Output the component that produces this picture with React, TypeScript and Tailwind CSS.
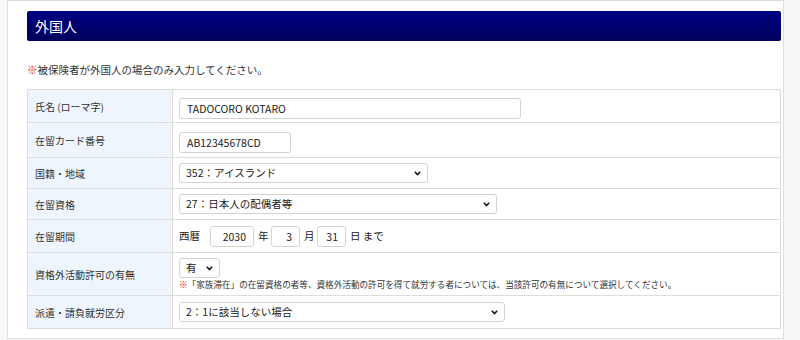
import React from "react";

const labelCell =
  "w-[145px] border border-[#dddddd] bg-[#eef5fc] pl-[7px] text-left align-middle text-[10px] font-normal text-[#333333]";
const valueCell = "border border-[#dddddd] bg-white pl-[6px] align-middle text-[#222222]";
const inputBase =
  "h-[21px] rounded-[3px] border border-[#d4d4d4] bg-white px-[7px] text-[10.5px] text-[#222222] outline-none";

function Select({ width, value, options }: { width: string; value: string; options: [string, string][] }) {
  return (
    <div className={`relative ${width}`}>
      <select
        className="block h-[20px] w-full appearance-none rounded-[3px] border border-[#d4d4d4] bg-white pl-[6px] pr-[16px] text-[10.5px] text-[#222222] outline-none"
        defaultValue={value}
      >
        {options.map(([v, t]) => (
          <option key={v} value={v}>
            {t}
          </option>
        ))}
      </select>
      <svg
        className="pointer-events-none absolute right-[7px] top-[8px]"
        width="7"
        height="5"
        viewBox="0 0 7 5"
      >
        <path d="M0.8 0.8 L3.5 3.6 L6.2 0.8" fill="none" stroke="#111" strokeWidth="1.5" />
      </svg>
    </div>
  );
}

export default function App() {
  return (
    <div className="h-[340px] w-[800px] bg-[#f8f8f8] font-['Noto_Sans_CJK_JP','Noto_Sans',sans-serif]">
      <div className="ml-[7px] h-[339px] w-[777px] border border-[#dedede] bg-white pl-[19px] pr-[2px] pt-[10px]">
        {/* Section title */}
        <div className="flex h-[30px] items-center rounded-[2px] bg-gradient-to-b from-[#000085] to-[#00005c] pl-[8px] text-[14px] text-white">
          外国人
        </div>

        <p className="mt-[21px] mb-[11px] text-[10.5px] leading-[16px] text-[#333333]">
          <span className="text-[#e60000]">※</span>被保険者が外国人の場合のみ入力してください。
        </p>

        <table className="w-full border-collapse">
          <tbody>
            <tr className="h-[33px]">
              <th className={labelCell}>氏名 (ローマ字)</th>
              <td className={valueCell}>
                <input className={`${inputBase} w-[342px]`} defaultValue="TADOCORO KOTARO" />
              </td>
            </tr>
            <tr className="h-[35px]">
              <th className={labelCell}>在留カード番号</th>
              <td className={valueCell}>
                <input className={`${inputBase} w-[112px]`} defaultValue="AB12345678CD" />
              </td>
            </tr>
            <tr className="h-[31px]">
              <th className={labelCell}>国籍・地域</th>
              <td className={valueCell}>
                <Select width="w-[249px]" value="352" options={[["352", "352：アイスランド"]]} />
              </td>
            </tr>
            <tr className="h-[31px]">
              <th className={labelCell}>在留資格</th>
              <td className={valueCell}>
                <Select width="w-[318px]" value="27" options={[["27", "27：日本人の配偶者等"]]} />
              </td>
            </tr>
            <tr className="h-[33px]">
              <th className={labelCell}>在留期間</th>
              <td className={valueCell}>
                <div className="flex items-center text-[10.5px] text-[#222222]">
                  <span className="w-[31px]">西暦</span>
                  <input className={`${inputBase} h-[20px] w-[44px] text-right`} defaultValue="2030" />
                  <span className="ml-[4px] w-[13px]">年</span>
                  <input className={`${inputBase} h-[20px] w-[29px] text-right`} defaultValue="3" />
                  <span className="ml-[4px] w-[13px]">月</span>
                  <input className={`${inputBase} h-[20px] w-[29px] text-right`} defaultValue="31" />
                  <span className="ml-[4px]">日 まで</span>
                </div>
              </td>
            </tr>
            <tr className="h-[43px]">
              <th className={labelCell}>資格外活動許可の有無</th>
              <td className={valueCell}>
                <Select
                  width="w-[41px]"
                  value="1"
                  options={[
                    ["1", "有"],
                    ["0", "無"],
                  ]}
                />
                <p className="mt-[1px] text-[8.6px] leading-[11px] text-[#333333]">
                  <span className="text-[#e60000]">※</span>
                  「家族滞在」の在留資格の者等、資格外活動の許可を得て就労する者については、当該許可の有無について選択してください。
                </p>
              </td>
            </tr>
            <tr className="h-[33px]">
              <th className={labelCell}>派遣・請負就労区分</th>
              <td className={valueCell}>
                <Select width="w-[326px]" value="2" options={[["2", "2：1に該当しない場合"]]} />
              </td>
            </tr>
          </tbody>
        </table>
      </div>
    </div>
  );
}
